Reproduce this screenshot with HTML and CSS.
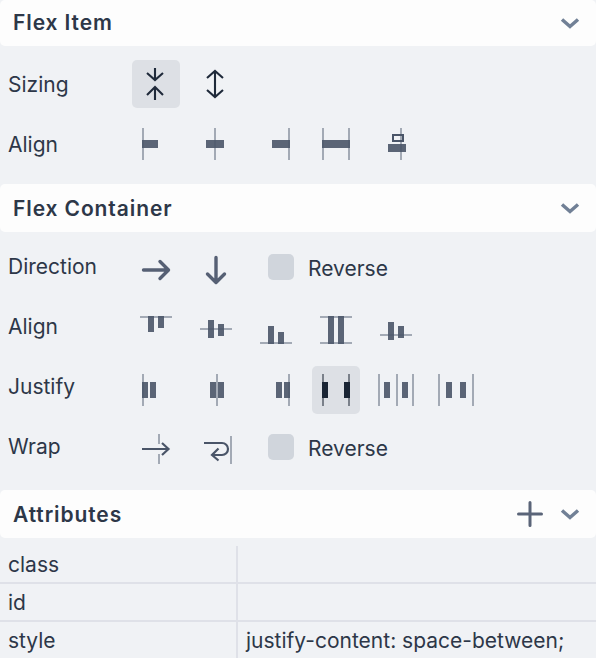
FILE: index.html
```html
<!DOCTYPE html>
<html lang="en">
<head>
<meta charset="utf-8">
<title>Inspector</title>
<link rel="stylesheet" href="styles.css">
</head>
<body>
<section>
  <header class="head"><h2>Flex Item</h2><svg class="chev" width="20" height="12" viewBox="0 0 20 12"><path d="M2 2.500l8 7 8-7"/></svg></header>
  <div class="body">
    <div class="row"><span class="label">Sizing</span>
      <button class="btn active"><svg width="48" height="48" class="line-icon dark"><path d="M23 8v12M15 13l8 7 8-7M23 27v13M15 35l8-8 8 8"/></svg></button>
      <button class="btn"><svg width="48" height="48" class="line-icon dark"><path d="M23 11v26M15 18l8-7 8 7M15 30l8 7 8-7"/></svg></button>
    </div>
    <div class="row"><span class="label">Align</span>
      <button class="btn"><svg width="48" height="48"><rect class="g" x="10" y="8" width="2" height="32"/><rect class="b" x="10" y="20" width="16" height="8"/></svg></button>
      <button class="btn"><svg width="48" height="48"><rect class="g" x="22" y="8" width="2" height="32"/><rect class="b" x="14" y="20" width="18" height="8"/></svg></button>
      <button class="btn"><svg width="48" height="48"><rect class="g" x="36" y="8" width="2" height="32"/><rect class="b" x="20" y="20" width="18" height="8"/></svg></button>
      <button class="btn"><svg width="48" height="48"><rect class="g" x="10" y="8" width="2" height="32"/><rect class="g" x="36" y="8" width="2" height="32"/><rect class="b" x="10" y="20" width="28" height="8"/></svg></button>
      <button class="btn"><svg width="48" height="48"><rect class="g" x="28" y="8" width="2" height="32"/><rect class="o" x="21" y="15" width="10" height="6"/><rect class="b" x="16" y="24" width="18" height="8"/></svg></button>
    </div>
  </div>
</section>
<section>
  <header class="head"><h2>Flex Container</h2><svg class="chev" width="20" height="12" viewBox="0 0 20 12"><path d="M2 2.500l8 7 8-7"/></svg></header>
  <div class="body">
    <div class="row"><span class="label up">Direction</span>
      <button class="btn"><svg width="48" height="48" class="line-icon thick"><path d="M11.500 24H36M28 15.500l8.500 8.500-8.500 8.500"/></svg></button>
      <button class="btn"><svg width="48" height="48" class="line-icon thick"><path d="M24 11.500V36M15.500 28l8.500 8.500 8.500-8.500"/></svg></button>
      <label class="check"><span class="box"></span><span class="txt">Reverse</span></label>
    </div>
    <div class="row"><span class="label up">Align</span>
      <button class="btn"><svg width="48" height="48"><rect class="g" x="8" y="10" width="32" height="2"/><rect class="b" x="16" y="10" width="6" height="16"/><rect class="b" x="26" y="10" width="6" height="12"/></svg></button>
      <button class="btn"><svg width="48" height="48"><rect class="g" x="8" y="22" width="32" height="2"/><rect class="b" x="16" y="14" width="6" height="18"/><rect class="b" x="26" y="18" width="6" height="12"/></svg></button>
      <button class="btn"><svg width="48" height="48"><rect class="g" x="8" y="36" width="32" height="2"/><rect class="b" x="16" y="20" width="6" height="18"/><rect class="b" x="26" y="26" width="6" height="12"/></svg></button>
      <button class="btn"><svg width="48" height="48"><rect class="g" x="8" y="10" width="32" height="2"/><rect class="g" x="8" y="36" width="32" height="2"/><rect class="b" x="16" y="10" width="6" height="28"/><rect class="b" x="26" y="10" width="6" height="28"/></svg></button>
      <button class="btn"><svg width="48" height="48"><rect class="g" x="8" y="28" width="32" height="2"/><rect class="b" x="16" y="16" width="6" height="18"/><rect class="b" x="26" y="20" width="6" height="12"/></svg></button>
    </div>
    <div class="row"><span class="label up">Justify</span>
      <button class="btn"><svg width="48" height="48"><rect class="g" x="10" y="8" width="2" height="32"/><rect class="b" x="10" y="16" width="6" height="16"/><rect class="b" x="18" y="16" width="6" height="16"/></svg></button>
      <button class="btn"><svg width="48" height="48"><rect class="g" x="24" y="8" width="2" height="32"/><rect class="b" x="18" y="16" width="6" height="16"/><rect class="b" x="26" y="16" width="6" height="16"/></svg></button>
      <button class="btn"><svg width="48" height="48"><rect class="g" x="36" y="8" width="2" height="32"/><rect class="b" x="24" y="16" width="6" height="16"/><rect class="b" x="32" y="16" width="6" height="16"/></svg></button>
      <button class="btn active"><svg width="48" height="48"><rect class="ga" x="10" y="8" width="2" height="32"/><rect class="ga" x="36" y="8" width="2" height="32"/><rect class="ba" x="10" y="16" width="6" height="16"/><rect class="ba" x="32" y="16" width="6" height="16"/></svg></button>
      <button class="btn"><svg width="48" height="48"><rect class="g" x="6" y="8" width="2" height="32"/><rect class="g" x="24" y="8" width="2" height="32"/><rect class="g" x="40" y="8" width="2" height="32"/><rect class="b" x="12" y="16" width="6" height="16"/><rect class="b" x="30" y="16" width="6" height="16"/></svg></button>
      <button class="btn"><svg width="48" height="48"><rect class="g" x="6" y="8" width="2" height="32"/><rect class="g" x="40" y="8" width="2" height="32"/><rect class="b" x="14" y="16" width="6" height="16"/><rect class="b" x="28" y="16" width="6" height="16"/></svg></button>
    </div>
    <div class="row"><span class="label up">Wrap</span>
      <button class="btn"><svg width="48" height="48"><rect class="g" x="26" y="8" width="2" height="10"/><rect class="g" x="26" y="28" width="2" height="10"/><path class="thin" d="M10 23H36M30 17l6.500 6-6.500 6"/></svg></button>
      <button class="btn"><svg width="48" height="48"><rect class="g" x="38" y="10" width="2" height="28"/><path class="thin" d="M12 17H30a6 6 0 0 1 0 12H20.500M26.500 22.500l-6.500 6.500 6.500 5.500"/></svg></button>
      <label class="check"><span class="box"></span><span class="txt">Reverse</span></label>
    </div>
  </div>
</section>
<section>
  <header class="head"><h2>Attributes</h2><svg class="plus" width="28" height="28" viewBox="0 0 28 28"><path d="M14 2.500v23M2.500 14h23"/></svg><svg class="chev" width="20" height="12" viewBox="0 0 20 12"><path d="M2 2.500l8 7 8-7"/></svg></header>
  <div class="attrs">
    <div class="attr"><span class="key">class</span><span class="val"></span></div>
    <div class="attr"><span class="key">id</span><span class="val"></span></div>
    <div class="attr"><span class="key">style</span><span class="val">justify-content: space-between;</span></div>
  </div>
</section>
</body>
</html>
```
FILE: styles.css
```css
* { box-sizing: border-box; }
html, body { margin: 0; padding: 0; }
body {
  width: 596px;
  height: 658px;
  overflow: hidden;
  background: #f0f2f5;
  color: #2d3748;
  font-family: Inter, "Liberation Sans", sans-serif;
  font-size: 21px;
}
.head {
  display: flex;
  align-items: center;
  height: 46px;
  padding: 0 16px 0 13px;
  background: #fdfdfd;
  border-radius: 5px;
}
section:not(:first-child) .head { height: 48px; }
section:first-child .head h2 { margin-bottom: 2px; }
.head h2 {
  flex: 1;
  margin: 0;
  font-size: 21px;
  font-weight: 600;
  letter-spacing: 0.9px;
}
.chev { fill: none; stroke: #718096; stroke-width: 3.500; }
.plus { fill: none; stroke: #5a6478; stroke-width: 3; stroke-linecap: round; margin-right: 16px; }
.body {
  display: flex;
  flex-direction: column;
  gap: 12px;
  padding: 14px 0 16px 8px;
}
.row { display: flex; align-items: center; gap: 12px; height: 48px; }
.label { width: 112px; }
.label.up { margin-bottom: 8px; }
.btn {
  width: 48px;
  height: 48px;
  padding: 0;
  border: 0;
  border-radius: 5px;
  background: transparent;
  display: block;
}
.btn svg { display: block; }
.btn.active { background: #dde0e5; }
.g { fill: #a3aab5; }
.b { fill: #4a5568; fill-opacity: .9; }
.o { fill: none; stroke: #4a5568; stroke-width: 2; }
.ga { fill: #7a808a; }
.ba { fill: #1a2535; }
.line-icon { fill: none; stroke: #566074; }
.line-icon.dark { stroke: #1f2a3a; stroke-width: 2.100; }
.line-icon.thick { stroke-width: 3.400; stroke-linecap: round; stroke-linejoin: round; }
.thin { fill: none; stroke: #4a5568; stroke-width: 2.200; }
.check { display: flex; align-items: center; gap: 14px; margin: 0 0 6px 16px; }
.box { width: 26px; height: 26px; border-radius: 5px; background: #d0d5dc; }
.txt { padding-top: 2px; }
.attrs { padding-top: 8px; }
.attr { display: flex; height: 38px; border-bottom: 2px solid #dfe1e8; }
.attr:last-child { border-bottom: 0; }
.key { width: 238px; padding-left: 8px; border-right: 2px solid #dfe1e8; line-height: 38px; }
.val { padding-left: 8px; line-height: 38px; }
```
